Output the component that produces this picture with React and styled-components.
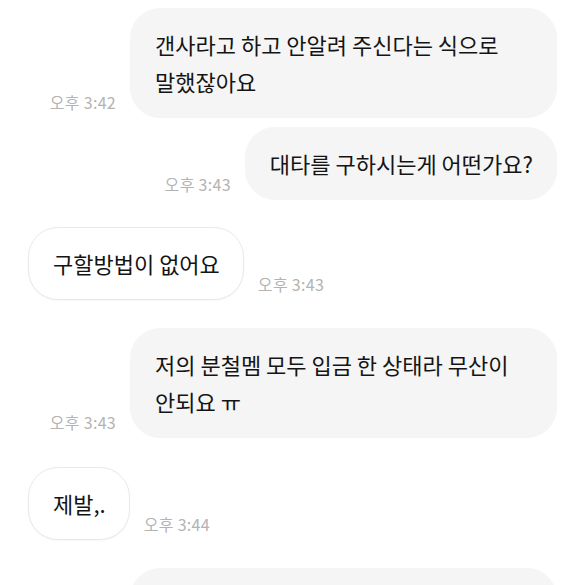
import React from "react";
import styled, { createGlobalStyle } from "styled-components";

const Global = createGlobalStyle`
  html, body {
    margin: 0;
    padding: 0;
    background: #ffffff;
    overflow: hidden;
  }
  body {
    font-family: "Noto Sans CJK KR", "Noto Sans", sans-serif;
  }
`;

const Chat = styled.div`
  display: flex;
  flex-direction: column;
  padding: 8px 28px 0 28px;
  width: 585px;
  box-sizing: border-box;
`;

const Row = styled.div`
  display: flex;
  flex-direction: ${(p) => (p.$mine ? "row-reverse" : "row")};
  justify-content: flex-start;
  align-items: flex-end;
  gap: 14px;
  margin-top: ${(p) => p.$gap}px;
`;

const Bubble = styled.div`
  box-sizing: border-box;
  max-width: 427px;
  padding: 17px 23px 17px 24px;
  border-radius: 30px;
  font-size: 22px;
  line-height: 37px;
  color: #141414;
  background: ${(p) => (p.$mine ? "#f5f5f5" : "#ffffff")};
  border: 1px solid ${(p) => (p.$mine ? "#f5f5f5" : "#e9e9e9")};
  box-shadow: ${(p) => (p.$mine ? "none" : "0 1px 2px rgba(0,0,0,0.04)")};
  word-break: keep-all;
`;

const Time = styled.span`
  flex-shrink: 0;
  font-size: 16px;
  line-height: 20px;
  letter-spacing: 0.3px;
  color: #b3b3b3;
  margin-bottom: 6px;
  white-space: nowrap;
`;

const messages = [
  { mine: true, gap: 0, text: "갠사라고 하고 안알려 주신다는 식으로 말했잖아요", time: "오후 3:42" },
  { mine: true, gap: 9, text: "대타를 구하시는게 어떤가요?", time: "오후 3:43" },
  { mine: false, gap: 27, text: "구할방법이 없어요", time: "오후 3:43" },
  { mine: true, gap: 28, text: "저의 분철멤 모두 입금 한 상태라 무산이 안되요 ㅠ", time: "오후 3:43" },
  { mine: false, gap: 29, text: "제발,.", time: "오후 3:44" },
  { mine: true, gap: 28, text: "그러면 다른 방법을 한번 찾아보시는 게 좋을 것 같아요", time: "오후 3:45" },
];

export default function App() {
  return (
    <>
      <Global />
      <Chat>
        {messages.map((m, i) => (
          <Row key={i} $mine={m.mine} $gap={m.gap}>
            <Bubble $mine={m.mine}>{m.text}</Bubble>
            <Time>{m.time}</Time>
          </Row>
        ))}
      </Chat>
    </>
  );
}
